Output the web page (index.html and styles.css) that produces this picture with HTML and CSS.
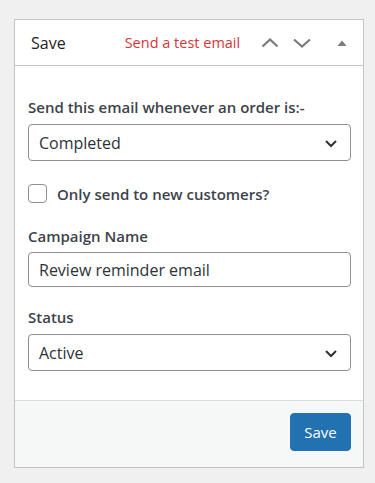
FILE: index.html
```html
<!DOCTYPE html>
<html>
<head>
<meta charset="utf-8">
<link rel="stylesheet" href="styles.css">
</head>
<body>
<div class="postbox">
  <div class="postbox-header">
    <h2 class="title">Save</h2>
    <a class="test-link">Send a test email</a>
    <div class="handles">
      <span class="handle">
        <svg width="20" height="20" viewBox="0 0 20 20"><path d="M2.5 13.5 L10 6.5 L17.5 13.5" fill="none" stroke="#787c82" stroke-width="2.2"/></svg>
      </span>
      <span class="handle">
        <svg width="20" height="20" viewBox="0 0 20 20"><path d="M2 6.5 L10 13.5 L18 6.5" fill="none" stroke="#787c82" stroke-width="2.2"/></svg>
      </span>
      <span class="handle toggle">
        <svg width="12" height="10" viewBox="0 0 12 10"><path d="M1.5 8 L6 2.5 L10.5 8 Z" fill="#787c82"/></svg>
      </span>
    </div>
  </div>
  <div class="inside">
    <label class="field-label first">Send this email whenever an order is:-</label>
    <div class="select">
      <span>Completed</span>
      <svg class="chev" width="16" height="16" viewBox="0 0 16 16"><path d="M3 6 L8 11 L13 6" fill="none" stroke="#2c3338" stroke-width="2"/></svg>
    </div>
    <div class="check-row">
      <span class="checkbox"></span>
      <span class="check-label">Only send to new customers?</span>
    </div>
    <label class="field-label">Campaign Name</label>
    <div class="input">Review reminder email</div>
    <label class="field-label status">Status</label>
    <div class="select">
      <span>Active</span>
      <svg class="chev" width="16" height="16" viewBox="0 0 16 16"><path d="M3 6 L8 11 L13 6" fill="none" stroke="#2c3338" stroke-width="2"/></svg>
    </div>
  </div>
  <div class="footer">
    <button class="btn">Save</button>
  </div>
</div>
</body>
</html>
```
FILE: styles.css
```css
html, body {
  margin: 0;
  padding: 0;
  background: #f0f0f1;
  font-family: "Open Sans", "Noto Sans", sans-serif;
  color: #3c434a;
}
body {
  padding: 19px 11px 15px 14px;
}
.postbox {
  background: #fff;
  border: 1px solid #c3c4c7;
  width: 348px;
}
.postbox-header {
  display: flex;
  align-items: center;
  height: 45px;
  border-bottom: 1px solid #c3c4c7;
  padding-left: 16px;
}
.title {
  margin: 0;
  font-size: 16px;
  font-weight: 400;
  color: #1d2327;
}
.test-link {
  margin-left: 59px;
  font-size: 14.5px;
  color: #d63638;
}
.handles {
  display: flex;
  align-items: center;
  margin-left: 14px;
}
.handle {
  display: flex;
  width: 32px;
  justify-content: center;
}
.handle.toggle {
  margin-left: 14px;
  width: 20px;
}
.inside {
  padding: 31px 12px 29px 13px;
  display: flex;
  flex-direction: column;
}
.field-label {
  display: block;
  font-size: 15px;
  font-weight: 600;
  line-height: 20px;
  margin-top: 17px;
}
.field-label.first { margin-top: 0; }
.field-label.status { margin-top: 20px; }
.select, .input {
  box-sizing: border-box;
  margin-top: 7px;
  border: 1px solid #8c8f94;
  border-radius: 4px;
  height: 37px;
  display: flex;
  align-items: center;
  padding: 0 10px;
  font-size: 16px;
  color: #2c3338;
  justify-content: space-between;
}
.input {
  height: 35px;
  margin-top: 6px;
}
.chev { margin-right: 1px; }
.check-row {
  display: flex;
  align-items: center;
  margin-top: 23px;
  height: 19px;
  margin-bottom: 6px;
}
.checkbox {
  box-sizing: border-box;
  width: 19px;
  height: 19px;
  border: 1px solid #8c8f94;
  border-radius: 4px;
  background: #fff;
}
.check-label {
  margin-left: 10px;
  font-size: 15px;
  font-weight: 600;
}
.footer {
  background: #f6f7f7;
  border-top: 1px solid #dcdcde;
  display: flex;
  justify-content: flex-end;
  padding: 12px 12px 16px;
}
.btn {
  background: #2271b1;
  color: #fff;
  border: 1px solid #2271b1;
  border-radius: 4px;
  font-family: inherit;
  font-size: 15px;
  height: 38px;
  width: 61px;
  padding: 0;
}
```
